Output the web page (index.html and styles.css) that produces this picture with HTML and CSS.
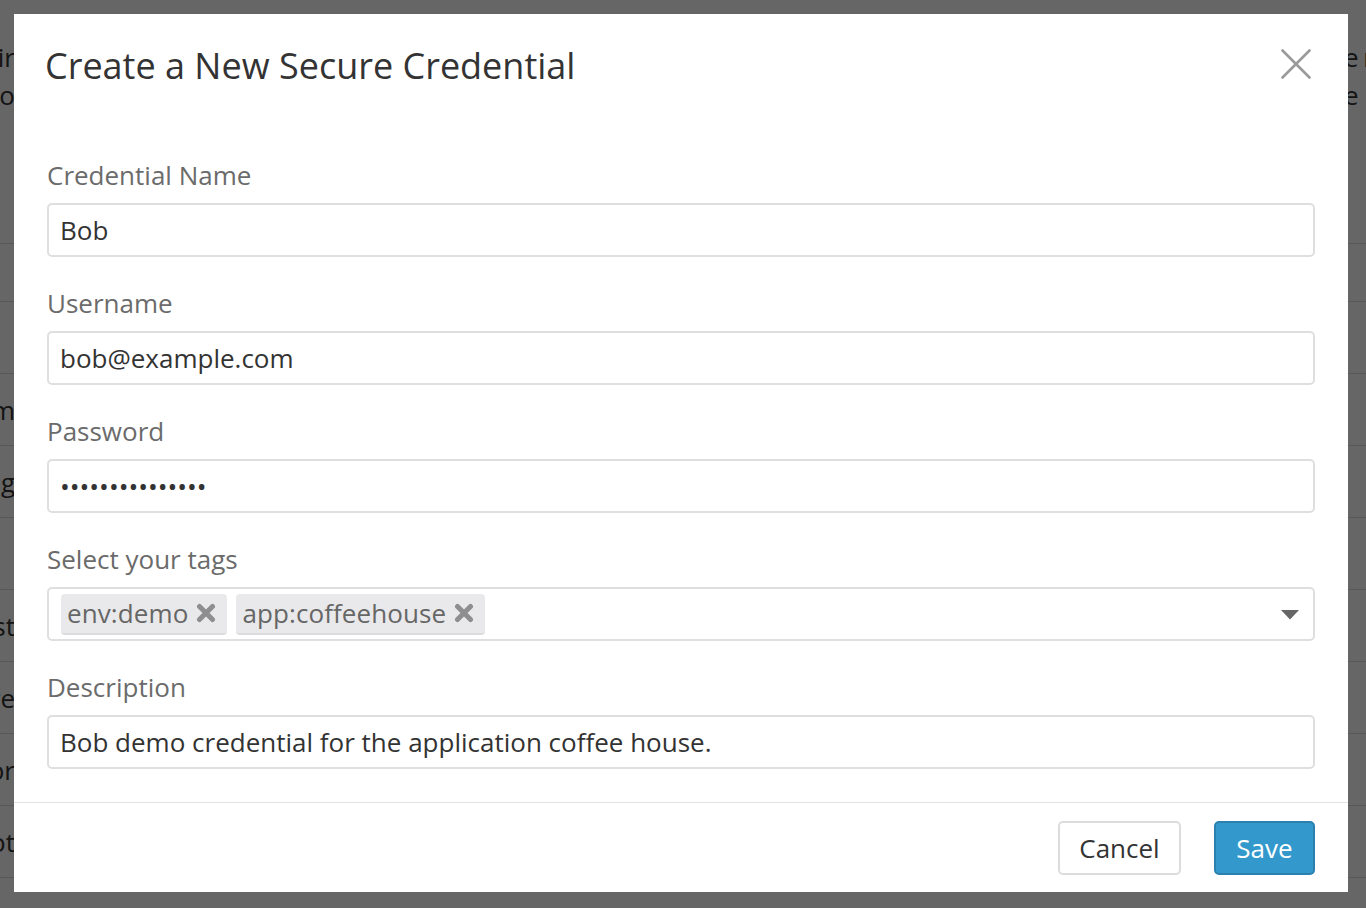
FILE: index.html
```html
<!DOCTYPE html>
<html lang="en">
<head>
<meta charset="utf-8">
<title>Create a New Secure Credential</title>
<link rel="stylesheet" href="styles.css">
</head>
<body>
<div class="page">
  <div class="intro">
    <div class="row-line"><span class="edge-left"><span>Confir</span></span><span class="spacer"></span><span class="edge-right"><span>e rest</span></span></div>
    <div class="row-line"><span class="edge-left"><span>Hello</span></span><span class="spacer"></span><span class="edge-right"><span>e</span></span></div>
  </div>
  <div class="table">
    <div class="trow first"></div>
    <div class="trow"></div>
    <div class="trow"><span class="edge-left"><span>Lorem</span></span></div>
    <div class="trow"><span class="edge-left"><span>Blog</span></span></div>
    <div class="trow"></div>
    <div class="trow"><span class="edge-left"><span>Test</span></span></div>
    <div class="trow"><span class="edge-left"><span>Store</span></span></div>
    <div class="trow"><span class="edge-left"><span>Error</span></span></div>
    <div class="trow"><span class="edge-left"><span>Robot</span></span></div>
    <div class="trow"></div>
  </div>
</div>

<div class="overlay">
  <div class="modal" role="dialog" aria-labelledby="modal-title">
    <div class="modal-header">
      <h1 id="modal-title" class="modal-title">Create a New Secure Credential</h1>
      <button class="close-btn" aria-label="Close">
        <svg width="32" height="32" viewBox="0 0 32 32"><path d="M2.5 2.5 L29.5 29.5 M29.5 2.5 L2.5 29.5" stroke="#9a9a9c" stroke-width="2.6" stroke-linecap="round" fill="none"/></svg>
      </button>
    </div>
    <div class="modal-body">
      <div class="field">
        <label class="field-label">Credential Name</label>
        <input class="field-input" type="text" value="Bob">
      </div>
      <div class="field">
        <label class="field-label">Username</label>
        <input class="field-input" type="text" value="bob@example.com">
      </div>
      <div class="field">
        <label class="field-label">Password</label>
        <input class="field-input" type="password" value="abcdefghijklmno">
      </div>
      <div class="field">
        <label class="field-label">Select your tags</label>
        <div class="field-input tag-select">
          <span class="chip">env:demo<svg class="chip-x" width="20" height="20" viewBox="0 0 20 20"><path d="M3.5 3.5 L16.5 16.5 M16.5 3.5 L3.5 16.5" stroke="#8e8e90" stroke-width="5" stroke-linecap="round" fill="none"/></svg></span>
          <span class="chip">app:coffeehouse<svg class="chip-x" width="20" height="20" viewBox="0 0 20 20"><path d="M3.5 3.5 L16.5 16.5 M16.5 3.5 L3.5 16.5" stroke="#8e8e90" stroke-width="5" stroke-linecap="round" fill="none"/></svg></span>
          <span class="select-spacer"></span>
          <svg class="caret" width="18" height="10" viewBox="0 0 18 10"><path d="M0 0 H18 L9 9.5 Z" fill="#666"/></svg>
        </div>
      </div>
      <div class="field">
        <label class="field-label">Description</label>
        <input class="field-input" type="text" value="Bob demo credential for the application coffee house.">
      </div>
    </div>
    <div class="modal-footer">
      <button class="btn btn-default">Cancel</button>
      <button class="btn btn-primary">Save</button>
    </div>
  </div>
</div>
</body>
</html>
```

FILE: styles.css
```css
* { box-sizing: border-box; }
html, body { margin: 0; padding: 0; }
body {
  background: #fff;
  font-family: "Open Sans", "Liberation Sans", sans-serif;
  color: #333;
  width: 1366px;
  height: 908px;
  overflow: hidden;
}

/* background page */
.page { width: 1366px; }
.intro { padding-top: 38px; height: 243px; }
.row-line { display: flex; height: 38px; align-items: center; font-size: 26px; }
.edge-left {
  width: 15px;
  overflow: hidden;
  display: flex;
  justify-content: flex-end;
  white-space: nowrap;
  font-size: 26px;
  color: #333;
}
.edge-right {
  width: 22px;
  overflow: hidden;
  white-space: nowrap;
  font-size: 26px;
  color: #333;
  word-spacing: -2px;
}
.spacer { flex: 1; }
.table { border-top: 1px solid #dcdcdc; }
.trow {
  height: 72px;
  border-bottom: 1px solid #dcdcdc;
  display: flex;
  align-items: center;
}
.trow.first { height: 58px; }

/* overlay + modal */
.overlay {
  position: fixed;
  inset: 0;
  background: rgba(0, 0, 0, 0.6);
  padding: 14px 18px 16px 14px;
  display: flex;
  align-items: flex-start;
}
.modal {
  width: 1334px;
  height: 878px;
  background: #fff;
  display: flex;
  flex-direction: column;
}
.modal-header {
  display: flex;
  align-items: center;
  padding: 28px 36px 0 31px;
}
.modal-title {
  flex: 1;
  margin: 0;
  font-size: 36px;
  line-height: 48px;
  font-weight: 400;
  color: #333;
}
.close-btn {
  width: 32px;
  height: 32px;
  padding: 0;
  border: 0;
  background: none;
  display: flex;
  margin-top: -4px;
}
.modal-body {
  padding: 68px 33px 33px;
  display: flex;
  flex-direction: column;
  gap: 29px;
  border-bottom: 1px solid #e3e3e5;
}
.field { display: flex; flex-direction: column; }
.field-label {
  font-size: 26px;
  line-height: 34px;
  color: #6b6b6b;
  margin-bottom: 11px;
}
.field-input {
  height: 54px;
  width: 100%;
  border: 2px solid #dfdfe2;
  border-radius: 5px;
  padding: 0 11px;
  font-family: "Open Sans", "Liberation Sans", sans-serif;
  font-size: 26px;
  color: #333;
  background: #fff;
  outline: none;
}
.tag-select {
  display: flex;
  align-items: center;
  gap: 9px;
  padding: 0 14px 0 12px;
}
.chip {
  display: inline-flex;
  align-items: center;
  height: 41px;
  padding: 0 11px 0 6px;
  gap: 8px;
  background: #e9e9eb;
  border-radius: 4px;
  border-bottom: 2px solid #dcdcdf;
  color: #666;
  font-size: 26px;
  line-height: 1;
  letter-spacing: 0.1px;
}
.chip-x { display: block; }
.select-spacer { flex: 1; }
.caret { display: block; margin-top: 2px; }

.modal-footer {
  display: flex;
  justify-content: flex-end;
  gap: 33px;
  padding: 18px 33px 17px;
}
.btn {
  height: 54px;
  border-radius: 5px;
  font-family: "Open Sans", "Liberation Sans", sans-serif;
  font-size: 26px;
  padding: 0;
}
.btn-default {
  background: #fff;
  border: 2px solid #dcdcdf;
  color: #333;
  width: 123px;
}
.btn-primary {
  background: #3399cc;
  border: 2px solid #2b80ae;
  color: #fff;
  width: 101px;
}
```
